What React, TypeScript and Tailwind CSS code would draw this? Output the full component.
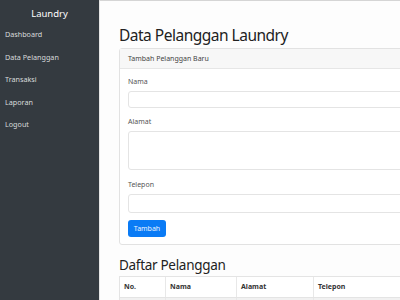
import React from "react";

export default function App() {
  const nav = ["Dashboard", "Data Pelanggan", "Transaksi", "Laporan", "Logout"];
  return (
    <div
      className="flex w-[400px] h-[300px] overflow-hidden bg-[#fdfdfd]"
      style={{ fontFamily: '"Noto Sans", "Open Sans", sans-serif' }}
    >
      <aside className="w-[99px] shrink-0 h-full bg-[#343a40] text-[#e9eaeb]">
        <div className="pt-[4px] h-[23px] text-center text-[9.5px] leading-[20px] text-white">Laundry</div>
        {nav.map((n) => (
          <div key={n} className="h-[22.5px] leading-[22.5px] px-[5px] text-[7.2px] text-[#d8dadc]">
            {n}
          </div>
        ))}
      </aside>
      <main className="w-[600px] shrink-0 h-full border-t border-[#d5d5d5] border-l border-l-[#e5e5e5] pl-[19px] pt-[22px] text-[#333]">
        <h1 className="text-[15.5px] leading-[24px] tracking-[-0.5px] text-[#222]">Data Pelanggan Laundry</h1>
        <div className="mt-[1px] border border-[#e2e2e2] rounded-[3px] bg-white">
          <div className="h-[20px] bg-[#f7f7f7] border-b border-[#e6e6e6] px-[8px] text-[7px] leading-[20px] text-[#444]">
            Tambah Pelanggan Baru
          </div>
          <div className="px-[8px] pt-[8px] pb-[7px]">
            <div className="text-[7px] leading-[10px] text-[#555]">Nama</div>
            <div className="mt-[4px] h-[17px] border border-[#e4e4e4] rounded-[3px] bg-white" />
            <div className="mt-[9px] text-[7px] leading-[10px] text-[#555]">Alamat</div>
            <div className="mt-[4px] h-[39px] border border-[#e4e4e4] rounded-[3px] bg-white" />
            <div className="mt-[10px] text-[7px] leading-[10px] text-[#555]">Telepon</div>
            <div className="mt-[4px] h-[19px] border border-[#e4e4e4] rounded-[3px] bg-white" />
            <button className="mt-[6px] w-[38px] h-[17px] rounded-[3px] bg-[#0a7bf5] text-[#eaf3ff] text-[7px] leading-[17px]">
              Tambah
            </button>
          </div>
        </div>
        <h2 className="mt-[11px] text-[13.5px] leading-[18px] tracking-[-0.3px] text-[#222]">Daftar Pelanggan</h2>
        <div className="mt-[2px] border-t border-l border-[#e4e4e4] bg-white">
          <div className="flex h-[21px] border-b border-[#e4e4e4] text-[7px] font-bold leading-[20px] text-[#333]">
            <div className="w-[46px] px-[4px] border-r border-[#e8e8e8]">No.</div>
            <div className="w-[71px] px-[4px] border-r border-[#e8e8e8]">Nama</div>
            <div className="w-[77px] px-[4px] border-r border-[#e8e8e8]">Alamat</div>
            <div className="flex-1 px-[4px]">Telepon</div>
          </div>
          <div className="flex h-[20px] bg-[#f1f1f1]">
            <div className="w-[46px] border-r border-[#e8e8e8]" />
            <div className="w-[71px] border-r border-[#e8e8e8]" />
            <div className="w-[77px] border-r border-[#e8e8e8]" />
            <div className="flex-1" />
          </div>
        </div>
      </main>
    </div>
  );
}
